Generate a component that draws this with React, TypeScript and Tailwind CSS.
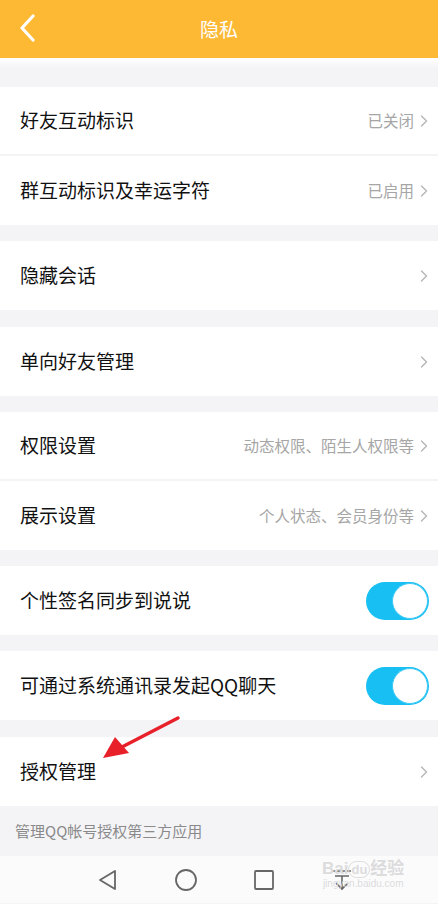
import { ChevronRight } from 'lucide-react';

const font = { fontFamily: '"Noto Sans CJK SC", "Noto Sans", sans-serif' };

function Row({ label, value, last = true }: { label: string; value?: string; last?: boolean }) {
  return (
    <div className={`flex h-[69px] items-center bg-white pl-5 pr-[4px] ${last ? '' : 'border-b-2 border-[#f4f4f6]'}`}>
      <span className="flex-1 text-[19px] text-[#111]">{label}</span>
      {value ? <span className="text-[15.5px] text-[#a6a6a6]">{value}</span> : null}
      <ChevronRight size={20} strokeWidth={1.6} className="text-[#b5b5b5]" />
    </div>
  );
}

function ToggleRow({ label }: { label: string }) {
  return (
    <div className="flex h-[69px] items-center bg-white pl-5 pr-[9px]">
      <span className="flex-1 text-[19px] text-[#111]">{label}</span>
      <div className="flex h-[38px] w-[63px] items-center justify-end rounded-full bg-[#18bff3] p-[1px]">
        <div className="h-[36px] w-[36px] rounded-full border border-[#3fcaf5] bg-white" />
      </div>
    </div>
  );
}

function Gap({ h = 'h-[16px]' }: { h?: string }) {
  return <div className={`${h} bg-[#f4f4f7]`} />;
}

export default function App() {
  return (
    <div className="relative h-[904px] w-[438px] overflow-hidden bg-[#f4f4f7]" style={font}>
      <header className="relative flex h-[58px] items-center justify-center bg-[#fdb834]">
        <svg className="absolute left-[18px] top-[14px]" width="20" height="28" viewBox="0 0 20 28">
          <path d="M15 2 L4 14 L15 26" fill="none" stroke="white" strokeWidth="3.2" strokeLinecap="round" strokeLinejoin="round" />
        </svg>
        <span className="text-[19px] text-white">隐私</span>
      </header>

      <div className="h-[10px] bg-gradient-to-b from-white to-[#f4f4f7]" />
      <Gap h="h-[19px]" />
      <Row label="好友互动标识" value="已关闭" last={false} />
      <Row label="群互动标识及幸运字符" value="已启用" />
      <Gap />
      <Row label="隐藏会话" />
      <Gap h="h-[17px]" />
      <Row label="单向好友管理" />
      <Gap />
      <Row label="权限设置" value="动态权限、陌生人权限等" last={false} />
      <Row label="展示设置" value="个人状态、会员身份等" />
      <Gap />
      <ToggleRow label="个性签名同步到说说" />
      <Gap />
      <ToggleRow label="可通过系统通讯录发起QQ聊天" />
      <Gap h="h-[17px]" />
      <Row label="授权管理" />
      <div className="flex h-[50px] items-center px-[15px] text-[15px] text-[#8a8a8a]">
        管理QQ帐号授权第三方应用
      </div>

      <nav className="flex h-[47px] items-center justify-center gap-[54px] bg-[#fbfbfc] pl-[12px]">
        <svg width="24" height="24" viewBox="0 0 24 24">
          <path d="M19 3 L4 12 L19 21 Z" fill="none" stroke="#666" strokeWidth="1.8" strokeLinejoin="round" />
        </svg>
        <svg width="24" height="24" viewBox="0 0 24 24">
          <circle cx="12" cy="12" r="10" fill="none" stroke="#666" strokeWidth="1.8" />
        </svg>
        <svg width="24" height="24" viewBox="0 0 24 24">
          <rect x="3" y="3" width="18" height="18" rx="1" fill="none" stroke="#666" strokeWidth="1.8" />
        </svg>
        <svg width="24" height="24" viewBox="0 0 24 24">
          <path d="M3 3 H21 M5 8 H19 M12 8 V21 M6 15 L12 21 L18 15" fill="none" stroke="#666" strokeWidth="1.6" />
        </svg>
      </nav>

      <svg className="pointer-events-none absolute left-[98px] top-[712px]" width="86" height="52" viewBox="0 0 86 52">
        <path d="M80 6 L22 36" stroke="#e8202a" strokeWidth="3.5" strokeLinecap="round" />
        <path d="M5 46 L17 25 L31 41 Z" fill="#e8202a" />
      </svg>

      <div className="pointer-events-none absolute left-[322px] top-[860px] flex flex-col items-center leading-none text-[#dcdcdc]">
        <span className="text-[17px] font-bold" style={{ fontFamily: '"Liberation Sans", "Noto Sans CJK SC", sans-serif' }}>
          Bai<span className="rounded-full border border-[#dcdcdc] px-[2px] text-[13px]">du</span>经验
        </span>
        <span className="mt-[2px] text-[10px]" style={{ fontFamily: '"Liberation Sans", sans-serif' }}>jingyan.baidu.com</span>
      </div>
    </div>
  );
}
